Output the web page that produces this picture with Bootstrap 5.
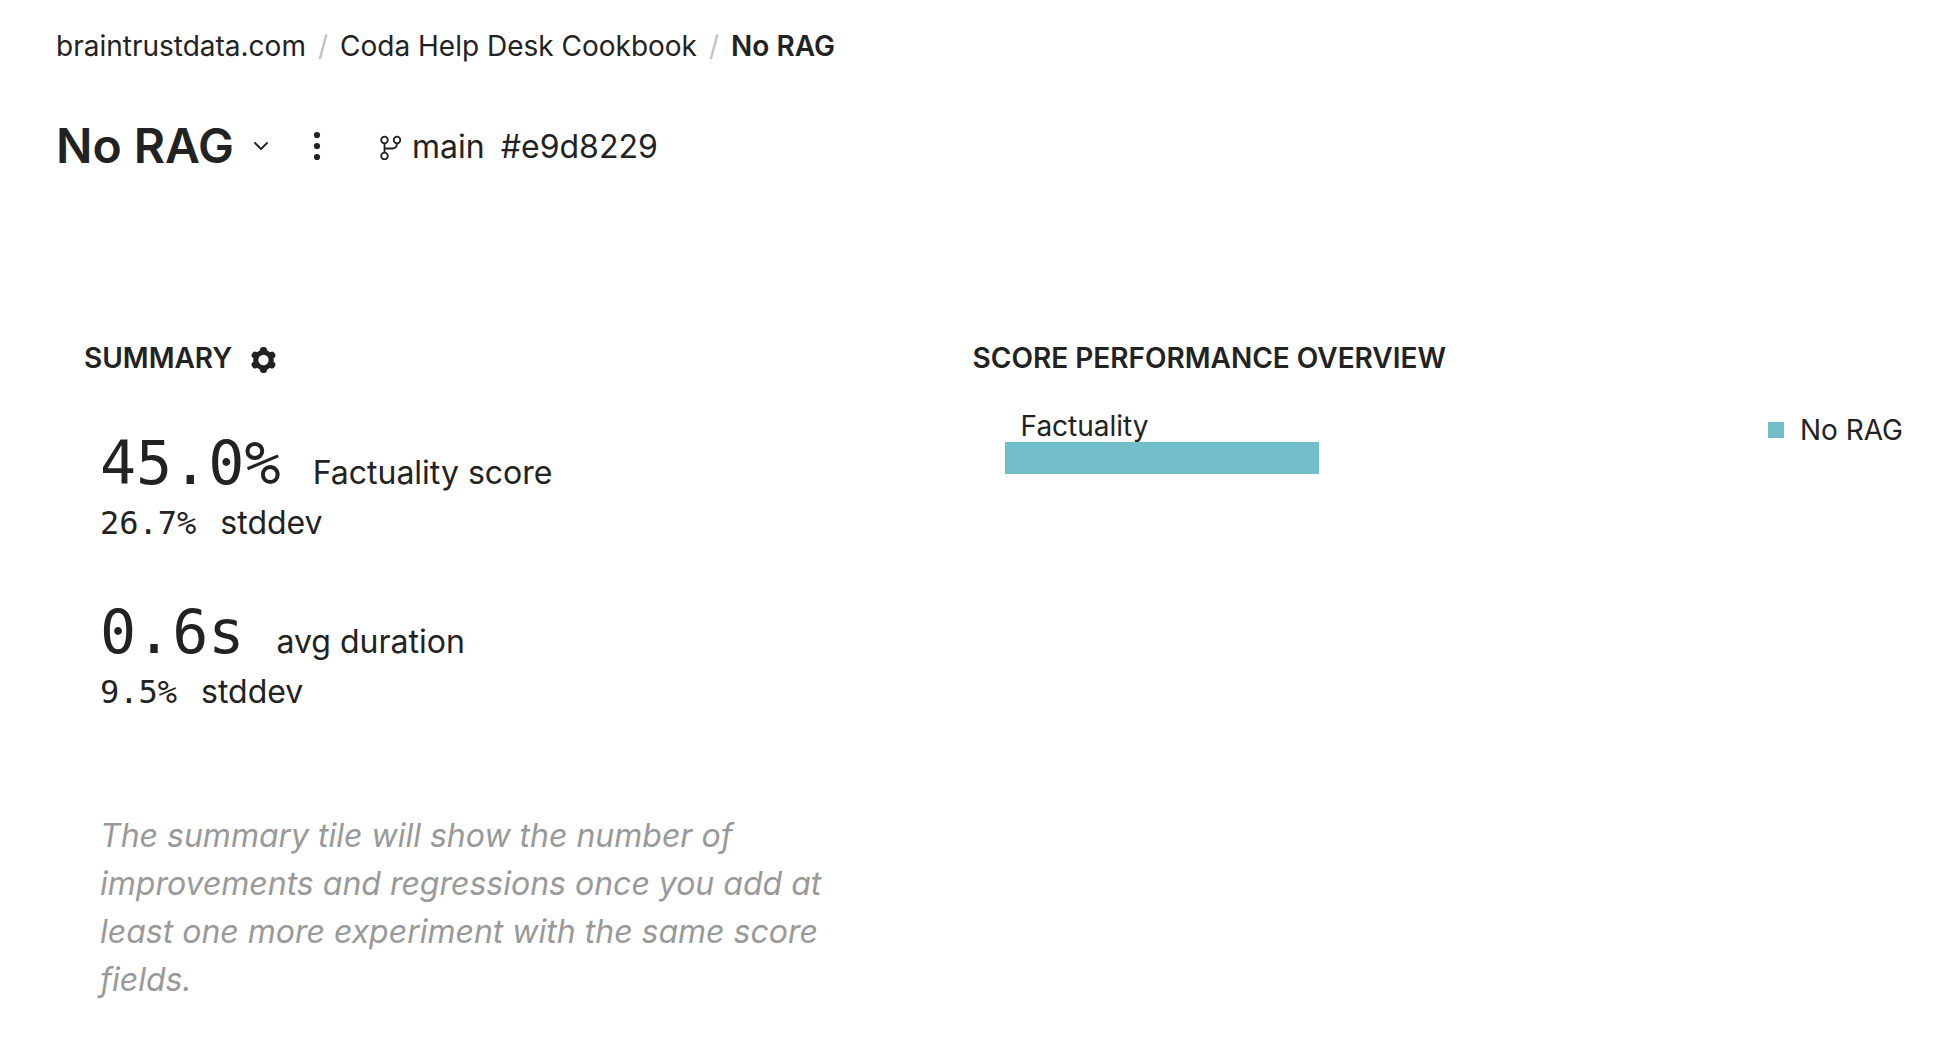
<!DOCTYPE html>
<html lang="en">
<head>
<meta charset="utf-8">
<meta name="viewport" content="width=device-width, initial-scale=1">
<title>No RAG</title>
<link href="https://cdn.jsdelivr.net/npm/bootstrap@5.3.0/dist/css/bootstrap.min.css" rel="stylesheet">
<style>
  body { font-family: Inter, "Liberation Sans", sans-serif; font-size: 32px; line-height: 48px; color: #222; background: #fff; }
  .page { padding: 26px 49px 48px 56px; }
  .breadcrumb { --bs-breadcrumb-font-size: 28px; --bs-breadcrumb-item-padding-x: 12px; --bs-breadcrumb-divider-color: #c0c0c0; --bs-breadcrumb-item-active-color: #222; line-height: 40px; }
  .breadcrumb-item::before { font-weight: 400; }
  .head-row { margin-top: 52px; }
  .page-title { font-size: 48px; line-height: 56px; font-weight: 600; }
  .icon-btn { color: #222; line-height: 1; }
  .chevron-btn { margin-left: 18px; }
  .more-btn { margin-left: 42px; }
  .branch-info { margin-left: 54px; padding-top: 2px; }
  .branch-name { gap: 10px; }
  .panels { margin-top: 164px; }
  .summary-panel { flex: 0 0 48%; padding: 0 44px 0 28px; }
  .score-panel { padding-left: 30px; min-width: 0; }
  .section-title { font-size: 28px; line-height: 40px; font-weight: 600; }
  .metrics { padding: 60px 0 0 16px; }
  .metric + .metric { margin-top: 60px; }
  .mono { font-family: "DejaVu Sans Mono", monospace; line-height: 32px; }
  .metric-value { font-size: 60px; line-height: 50px; }
  .metric-main { gap: 32px; }
  .metric-sub { gap: 24px; margin-top: 2px; }
  .hint { color: #999; margin-top: 96px; }
  .chart-row { margin-top: 32px; padding-left: 32px; gap: 64px; }
  .bar-label { font-size: 28px; line-height: 32px; padding-left: 16px; }
  .score-bar { height: 32px; background: #72bfca; position: relative; }
  .legend { font-size: 28px; line-height: 40px; }
  .swatch { width: 16px; height: 16px; background: #72bfca; }
</style>
<script src="https://cdn.jsdelivr.net/npm/bootstrap@5.3.0/dist/js/bootstrap.bundle.min.js"></script>
</head>
<body>
<main class="page">
  <nav aria-label="breadcrumb">
    <ol class="breadcrumb mb-0">
      <li class="breadcrumb-item"><a href="#" class="text-reset text-decoration-none">braintrustdata.com</a></li>
      <li class="breadcrumb-item"><a href="#" class="text-reset text-decoration-none">Coda Help Desk Cookbook</a></li>
      <li class="breadcrumb-item active fw-semibold" aria-current="page">No RAG</li>
    </ol>
  </nav>

  <header class="head-row d-flex align-items-center">
    <h1 class="page-title mb-0">No RAG</h1>
    <button type="button" class="btn icon-btn chevron-btn border-0 p-0 d-flex" aria-label="Switch experiment">
      <svg width="18" height="18" viewBox="0 0 18 18" fill="none" stroke="currentColor" stroke-width="1.8" stroke-linecap="round" stroke-linejoin="round"><path d="M3 6l6 6 6-6"/></svg>
    </button>
    <button type="button" class="btn icon-btn more-btn border-0 p-0 d-flex" aria-label="More options">
      <svg width="10" height="30" viewBox="0 0 10 30" fill="currentColor"><circle cx="5" cy="4" r="3.1"/><circle cx="5" cy="15" r="3.1"/><circle cx="5" cy="26" r="3.1"/></svg>
    </button>
    <div class="branch-info d-flex align-items-center gap-3">
      <span class="branch-name d-flex align-items-center">
        <svg width="26" height="26" viewBox="0 0 26 26" fill="none" stroke="currentColor" stroke-width="1.8"><circle cx="8.500" cy="6" r="3.3"/><circle cx="21" cy="6" r="3.3"/><circle cx="8.500" cy="22" r="3.3"/><path d="M8.500 9.300v9.400M21 9.300c0 3.400-1.500 5.200-4.500 5.200h-8"/></svg>
        <span>main</span>
      </span>
      <span>#e9d8229</span>
    </div>
  </header>

  <div class="panels d-flex">
    <section class="summary-panel">
      <div class="d-flex align-items-center gap-3">
        <h2 class="section-title mb-0">SUMMARY</h2>
        <button type="button" class="btn icon-btn border-0 p-0 d-flex" aria-label="Summary settings">
          <svg width="32" height="32" viewBox="0 0 32 32"><g fill="currentColor"><circle cx="15.500" cy="18" r="10.300"/><rect x="12" y="5" width="7" height="26" rx="3"/><rect x="12" y="5" width="7" height="26" rx="3" transform="rotate(60 15.500 18)"/><rect x="12" y="5" width="7" height="26" rx="3" transform="rotate(120 15.500 18)"/></g><circle cx="15.500" cy="18" r="5.200" fill="#fff"/></svg>
        </button>
      </div>
      <div class="metrics">
        <div class="metric">
          <div class="metric-main d-flex align-items-baseline"><span class="mono metric-value">45.0%</span><span>Factuality score</span></div>
          <div class="metric-sub d-flex align-items-baseline"><span class="mono">26.7%</span><span>stddev</span></div>
        </div>
        <div class="metric">
          <div class="metric-main d-flex align-items-baseline"><span class="mono metric-value">0.6s</span><span>avg duration</span></div>
          <div class="metric-sub d-flex align-items-baseline"><span class="mono">9.5%</span><span>stddev</span></div>
        </div>
        <p class="hint fst-italic mb-0">The summary tile will show the number of improvements and regressions once you add at least one more experiment with the same score fields.</p>
      </div>
    </section>

    <section class="score-panel flex-grow-1">
      <h2 class="section-title mb-0">SCORE PERFORMANCE OVERVIEW</h2>
      <div class="chart-row d-flex align-items-start">
        <div class="flex-grow-1">
          <div class="bar-label">Factuality</div>
          <div class="score-bar" style="width:45%"></div>
        </div>
        <div class="legend d-flex align-items-center gap-3"><span class="swatch"></span><span>No RAG</span></div>
      </div>
    </section>
  </div>
</main>
</body>
</html>
